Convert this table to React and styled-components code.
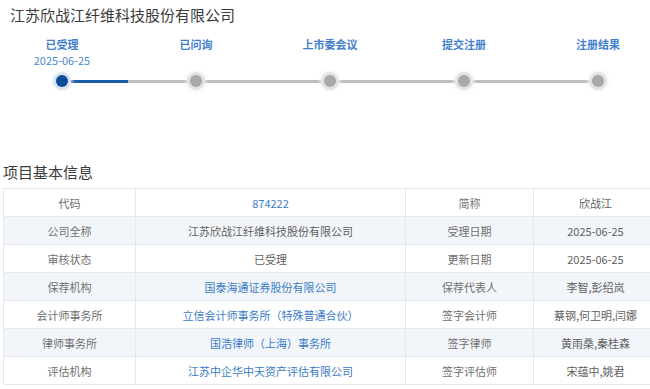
import React from "react";
import styled, { createGlobalStyle } from "styled-components";

const Global = createGlobalStyle`
  html, body { margin: 0; padding: 0; background: #fff; overflow: hidden; }
  body { font-family: "Noto Sans CJK SC", "Noto Sans", sans-serif; }
`;

const Page = styled.div`
  width: 650px;
  height: 389px;
  overflow: hidden;
  display: flex;
  flex-direction: column;
`;

const Title = styled.h1`
  margin: 5px 0 0 10px;
  font-size: 15px;
  line-height: 20px;
  font-weight: 400;
  color: #3a3a3a;
`;

const Steps = styled.div`
  display: grid;
  grid-template-columns: repeat(5, 134px);
  margin: 12px 0 0 -5px;
`;

const Step = styled.div`
  display: flex;
  flex-direction: column;
  align-items: center;
`;

const StepLabel = styled.div`
  font-size: 11px;
  line-height: 14px;
  font-weight: 700;
  color: #3f7fcc;
`;

const StepDate = styled.div`
  margin-top: 2px;
  font-size: 11px;
  line-height: 14px;
  color: #4d8bd0;
  min-height: 14px;
`;

const Track = styled.div`
  display: flex;
  align-items: center;
  margin: 8px 0 0 56px;
`;

const Dot = styled.span`
  width: 12px;
  height: 12px;
  border-radius: 50%;
  flex: none;
  background: ${(p) => (p.$active ? "#0d4c98" : "#a9a9a9")};
  box-shadow: 0 0 0 3px ${(p) => (p.$active ? "#dae4f0" : "#e3e3e3")},
    0 0 4px 4px ${(p) => (p.$active ? "#eef2f7" : "#f1f1f1")};
  position: relative;
  z-index: 1;
`;

const Segment = styled.span`
  width: 122px;
  height: 3px;
  flex: none;
  background: ${(p) =>
    p.$progress
      ? `linear-gradient(to right, #1b5ca6 0, #1b5ca6 ${p.$progress}px, #bdbdbd ${p.$progress}px)`
      : "#bdbdbd"};
`;

const SectionTitle = styled.h2`
  margin: 75px 0 0 3px;
  font-size: 15px;
  line-height: 20px;
  font-weight: 400;
  color: #3a3a3a;
`;

const Table = styled.table`
  margin: 6px 0 0 3px;
  width: 654px;
  border-collapse: collapse;
  table-layout: fixed;
  font-size: 11px;
`;

const Row = styled.tr`
  height: 28px;
  background: ${(p) => (p.$alt ? "#f2f6fa" : "#fff")};
`;

const Cell = styled.td`
  border: 1px solid #e6eaef;
  text-align: center;
  padding: 0;
  color: ${(p) => (p.$link ? "#3a7cc6" : p.$label ? "#707070" : "#5f5f5f")};
  white-space: nowrap;
  overflow: hidden;
`;

const steps = [
  { label: "已受理", date: "2025-06-25" },
  { label: "已问询" },
  { label: "上市委会议" },
  { label: "提交注册" },
  { label: "注册结果" },
];

const rows = [
  ["代码", { v: "874222", link: true }, "简称", { v: "欣战江" }],
  ["公司全称", { v: "江苏欣战江纤维科技股份有限公司" }, "受理日期", { v: "2025-06-25" }],
  ["审核状态", { v: "已受理" }, "更新日期", { v: "2025-06-25" }],
  ["保荐机构", { v: "国泰海通证券股份有限公司", link: true }, "保荐代表人", { v: "李智,彭绍岚" }],
  ["会计师事务所", { v: "立信会计师事务所（特殊普通合伙）", link: true }, "签字会计师", { v: "蔡钢,何卫明,闫娜" }],
  ["律师事务所", { v: "国浩律师（上海）事务所", link: true }, "签字律师", { v: "黄雨桑,秦桂森" }],
  ["评估机构", { v: "江苏中企华中天资产评估有限公司", link: true }, "签字评估师", { v: "宋蕴中,姚君" }],
];

export default function App() {
  return (
    <Page>
      <Global />
      <Title>江苏欣战江纤维科技股份有限公司</Title>
      <Steps>
        {steps.map((s) => (
          <Step key={s.label}>
            <StepLabel>{s.label}</StepLabel>
            <StepDate>{s.date || ""}</StepDate>
          </Step>
        ))}
      </Steps>
      <Track>
        <Dot $active />
        <Segment $progress={60} />
        <Dot />
        <Segment />
        <Dot />
        <Segment />
        <Dot />
        <Segment />
        <Dot />
      </Track>
      <SectionTitle>项目基本信息</SectionTitle>
      <Table>
        <colgroup>
          <col style={{ width: 132 }} />
          <col style={{ width: 270 }} />
          <col style={{ width: 128 }} />
          <col style={{ width: 124 }} />
        </colgroup>
        <tbody>
          {rows.map((r, i) => (
            <Row key={r[0]} $alt={i % 2 === 1}>
              <Cell $label>{r[0]}</Cell>
              <Cell $link={r[1].link}>{r[1].v}</Cell>
              <Cell $label>{r[2]}</Cell>
              <Cell $link={r[3].link}>{r[3].v}</Cell>
            </Row>
          ))}
        </tbody>
      </Table>
    </Page>
  );
}
